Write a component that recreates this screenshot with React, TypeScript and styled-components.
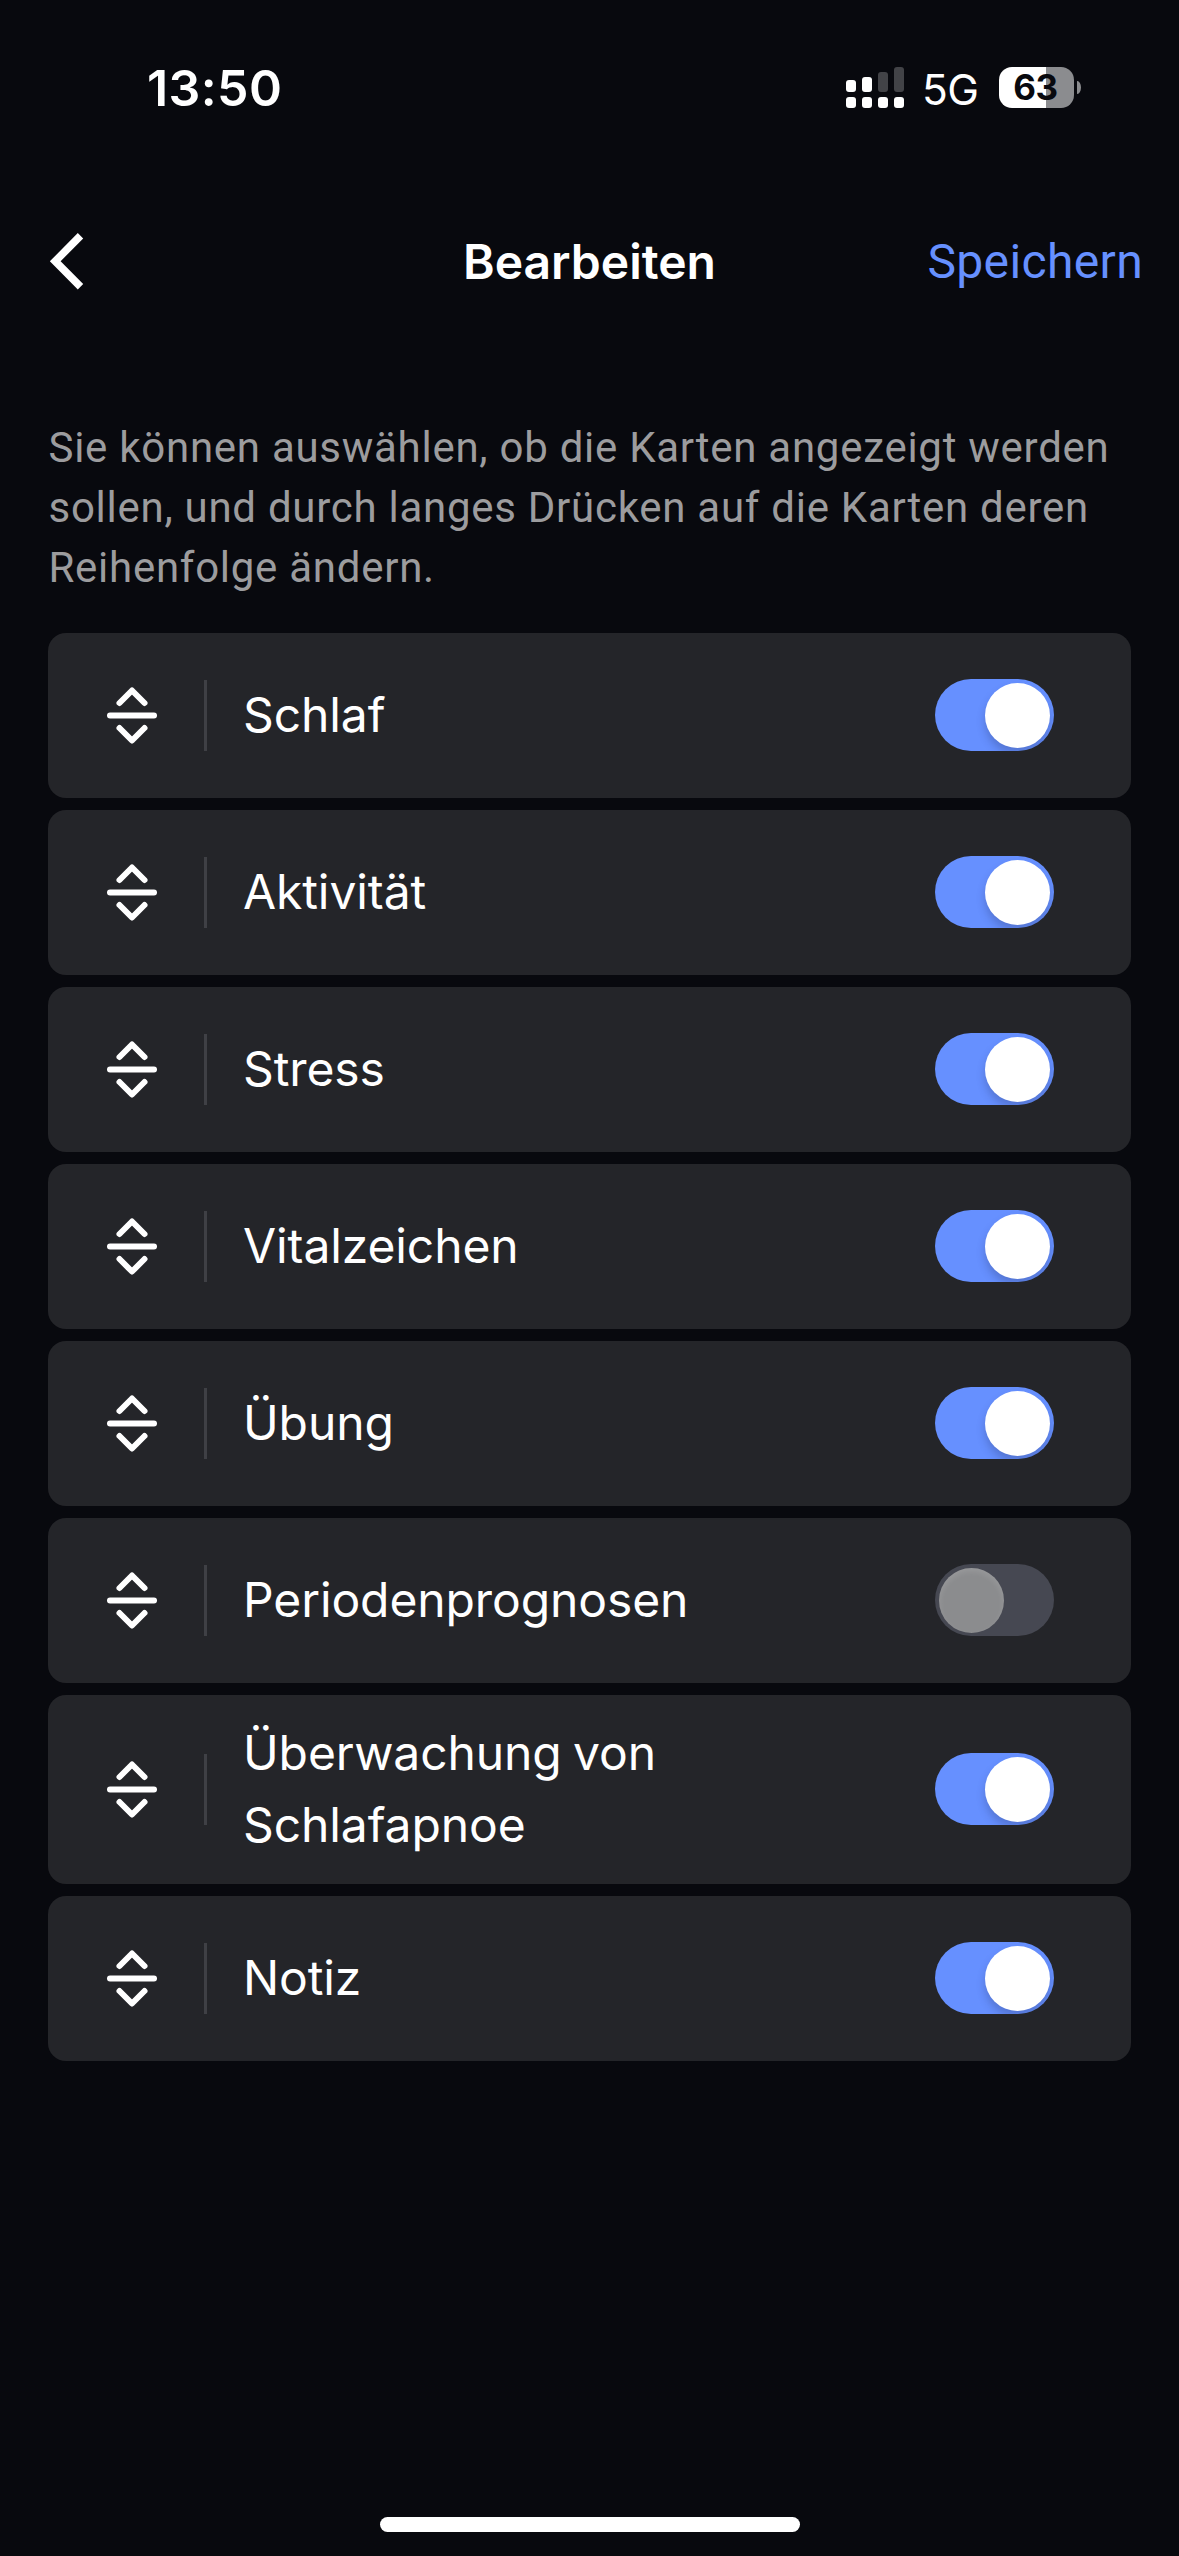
import React, { useState } from "react";
import styled, { createGlobalStyle } from "styled-components";

const GlobalStyle = createGlobalStyle`
  * { box-sizing: border-box; }
  body { margin: 0; background: #08090e; }
  button { font: inherit; color: inherit; background: none; border: 0; padding: 0; }
  p, h1, ul { margin: 0; padding: 0; }
`;

const Screen = styled.main`
  display: flex;
  flex-direction: column;
  width: 1179px;
  height: 2556px;
  overflow: hidden;
  background: #08090e;
  color: #fff;
  font-family: Inter, "Liberation Sans", sans-serif;
`;

const StatusBar = styled.header`
  display: flex;
  align-items: center;
  justify-content: space-between;
  height: 175px;
  padding: 0 98px 0 147px;
`;

const Clock = styled.time`
  font-size: 50px;
  line-height: 60px;
  font-weight: 600;
  letter-spacing: 0.4px;
`;

const StatusIcons = styled.div`
  display: flex;
  align-items: center;
`;

const Network = styled.span`
  margin: 4px 0 0 18px;
  width: 77px;
  font-size: 42.5px;
  line-height: 48px;
  letter-spacing: -0.6px;
`;

const Battery = styled.div`
  display: flex;
  align-items: center;
  gap: 3px;
`;

const BatteryBody = styled.div<{ $level: number }>`
  display: flex;
  align-items: center;
  justify-content: center;
  width: 75px;
  height: 41px;
  padding-right: 2px;
  border-radius: 13px;
  background: linear-gradient(to right, #fff ${(p) => p.$level}%, #8b8c8f ${(p) => p.$level}%);
  color: #08090e;
  font-size: 35px;
  line-height: 41px;
  font-weight: 700;
  letter-spacing: -0.5px;
`;

const BatteryTip = styled.div`
  width: 4px;
  height: 13px;
  border-radius: 0 4px 4px 0 / 0 7px 7px 0;
  background: #8b8c8f;
`;

const NavBar = styled.nav`
  display: grid;
  grid-template-columns: 1fr auto 1fr;
  align-items: center;
  height: 174px;
  padding: 0 36px;
`;

const BackButton = styled.button`
  display: flex;
  justify-self: start;
  margin-left: 12px;
`;

const Title = styled.h1`
  font-size: 48px;
  line-height: 60px;
  font-weight: 600;
`;

const SaveButton = styled.button`
  justify-self: end;
  font-family: Roboto, sans-serif;
  font-size: 48px;
  line-height: 60px;
  letter-spacing: 0.35px;
  color: #6690ff;
`;

const Hint = styled.p`
  padding: 69px 48px 0 48.5px;
  font-family: Roboto, sans-serif;
  font-size: 42px;
  line-height: 60px;
  letter-spacing: 0.73px;
  color: #9c9c9e;
  white-space: nowrap;
`;

const CardList = styled.ul`
  display: flex;
  flex-direction: column;
  gap: 12px;
  padding: 35px 48px 0;
  list-style: none;
`;

const Card = styled.li`
  display: flex;
  align-items: center;
  min-height: 165px;
  padding: 22px 77px 23px 57px;
  border-radius: 18px;
  background: #242529;
`;

const Divider = styled.span`
  width: 3px;
  height: 71px;
  margin: 0 36px 0 45px;
  background: #3f4045;
`;

const Label = styled.span`
  width: 480px;
  font-size: 48px;
  line-height: 72px;
  letter-spacing: -0.1px;
  word-spacing: -2px;
`;

const Toggle = styled.button<{ $on: boolean }>`
  display: flex;
  justify-content: ${(p) => (p.$on ? "flex-end" : "flex-start")};
  align-items: center;
  width: 119px;
  height: 72px;
  margin-left: auto;
  padding: 0 4px;
  border-radius: 36px;
  overflow: hidden;
  background: ${(p) => (p.$on ? "#6690ff" : "#464852")};
`;

const Knob = styled.span<{ $on: boolean }>`
  width: 65px;
  height: 65px;
  border-radius: 50%;
  background: ${(p) => (p.$on ? "#fff" : "#8b8c8e")};
  box-shadow: ${(p) => (p.$on ? "0 6px 8px rgba(30, 40, 80, 0.25)" : "inset 0 3px 6px rgba(255, 255, 255, 0.12)")};
`;

const HomeArea = styled.footer`
  display: flex;
  justify-content: center;
  margin-top: auto;
  padding-bottom: 24px;
`;

const HomeIndicator = styled.div`
  width: 420px;
  height: 15px;
  border-radius: 8px;
  background: #fff;
`;

const SignalIcon = () => (
  <svg width="58" height="41" viewBox="0 0 58 41" fill="#fff">
    <rect x="0" y="13" width="10" height="12" rx="3" />
    <rect x="16" y="10" width="10" height="15" rx="3" />
    <rect x="32" y="5" width="10" height="20" rx="3" fill="#424347" />
    <rect x="48" y="0" width="10" height="25" rx="3" fill="#424347" />
    {[0, 16, 32, 48].map((x) => (
      <rect key={x} x={x} y="30" width="10" height="11" rx="3" />
    ))}
  </svg>
);

const BackIcon = () => (
  <svg width="40" height="60" viewBox="0 0 40 60" fill="none" stroke="#fff" strokeWidth="7.6">
    <path d="M32.5 3.8L7.2 29.3L32.5 54.8" />
  </svg>
);

const DragIcon = () => (
  <svg width="54" height="60" viewBox="0 0 54 60" fill="none" stroke="#fff" strokeWidth="6" strokeLinecap="round" strokeLinejoin="round">
    <path d="M14.5 18L27 5.5L39.5 18" />
    <path d="M5 30.5H49" />
    <path d="M14.5 43L27 55.5L39.5 43" />
  </svg>
);

const initialCards = [
  { name: "Schlaf", on: true },
  { name: "Aktivität", on: true },
  { name: "Stress", on: true },
  { name: "Vitalzeichen", on: true },
  { name: "Übung", on: true },
  { name: "Periodenprognosen", on: false },
  { name: "Überwachung von Schlafapnoe", on: true },
  { name: "Notiz", on: true },
];

export default function App() {
  const [cards, setCards] = useState(initialCards);
  const toggle = (name: string) =>
    setCards((list) => list.map((c) => (c.name === name ? { ...c, on: !c.on } : c)));

  return (
    <Screen>
      <GlobalStyle />
      <StatusBar>
        <Clock>13:50</Clock>
        <StatusIcons>
          <SignalIcon />
          <Network>5G</Network>
          <Battery>
            <BatteryBody $level={63}>63</BatteryBody>
            <BatteryTip />
          </Battery>
        </StatusIcons>
      </StatusBar>
      <NavBar>
        <BackButton>
          <BackIcon />
        </BackButton>
        <Title>Bearbeiten</Title>
        <SaveButton>Speichern</SaveButton>
      </NavBar>
      <Hint>
        Sie können auswählen, ob die Karten angezeigt werden
        <br />
        sollen, und durch langes Drücken auf die Karten deren
        <br />
        Reihenfolge ändern.
      </Hint>
      <CardList>
        {cards.map((card) => (
          <Card key={card.name}>
            <DragIcon />
            <Divider />
            <Label>{card.name}</Label>
            <Toggle $on={card.on} role="switch" aria-checked={card.on} onClick={() => toggle(card.name)}>
              <Knob $on={card.on} />
            </Toggle>
          </Card>
        ))}
      </CardList>
      <HomeArea>
        <HomeIndicator />
      </HomeArea>
    </Screen>
  );
}
